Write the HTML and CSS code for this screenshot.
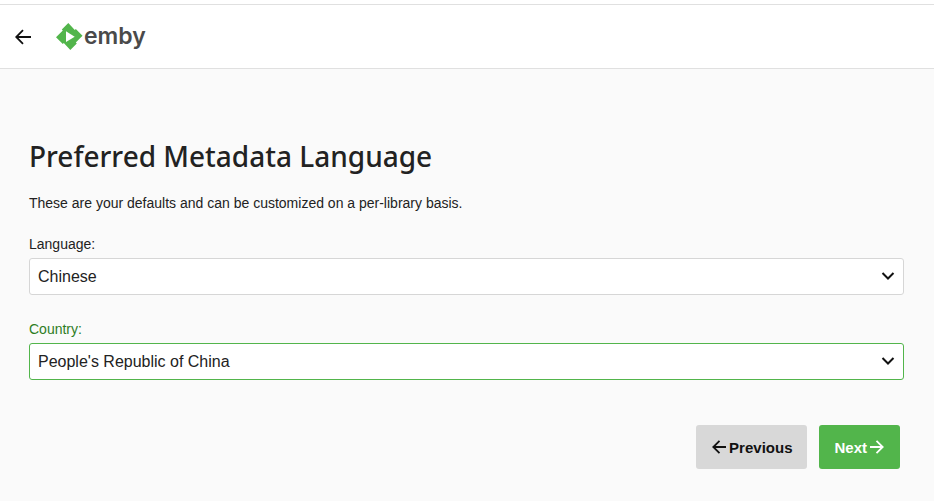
FILE: index.html
```html
<!DOCTYPE html>
<html lang="en">

<head>
    <meta charset="UTF-8">
    <meta name="viewport" content="width=device-width, initial-scale=1.0">
    <title>Emby</title>
    <link rel="stylesheet" href="styles.css">
</head>

<body>
    <header class="header">
        <button class="back" type="button" aria-label="Back">
            <svg class="icon" viewBox="0 0 16 16">
                <path d="M16 8H2M8 1.2L1.2 8L8 14.8" />
            </svg>
        </button>
        <a class="logo" href="#">
            <svg class="mark" viewBox="0 0 27 27">
                <path d="M12.3 0L5.8 6.5L6.8 7.5L0 14.3L6.8 21L7.8 20L14.3 27L20.8 20.5L19.8 19.5L26.5 12.7L19.8 6L18.8 7Z" />
                <path class="play" d="M10 8.3V19L18.7 13.8Z" />
            </svg>
            <span>emby</span>
        </a>
    </header>

    <main>
        <form class="wizard">
            <h1>Preferred Metadata Language</h1>
            <p>These are your defaults and can be customized on a per-library basis.</p>

            <div class="field">
                <label for="language">Language:</label>
                <div class="selectBox">
                    <select id="language">
                        <option>Chinese</option>
                    </select>
                    <svg class="chevron" viewBox="0 0 14 14">
                        <path d="M1.5 4L7 9.5L12.5 4" />
                    </svg>
                </div>
            </div>

            <div class="field active">
                <label for="country">Country:</label>
                <div class="selectBox">
                    <select id="country">
                        <option>People's Republic of China</option>
                    </select>
                    <svg class="chevron" viewBox="0 0 14 14">
                        <path d="M1.5 4L7 9.5L12.5 4" />
                    </svg>
                </div>
            </div>

            <div class="buttons">
                <button class="btn prev" type="button">
                    <svg class="icon" viewBox="0 0 16 16">
                        <path d="M15 8H3M8.5 1.8L2.3 8L8.5 14.2" />
                    </svg>
                    Previous
                </button>
                <button class="btn next" type="submit">
                    Next
                    <svg class="icon" viewBox="0 0 16 16">
                        <path d="M1 8H13M7.5 1.8L13.7 8L7.5 14.2" />
                    </svg>
                </button>
            </div>
        </form>
    </main>
</body>

</html>
```
FILE: styles.css
```css
* {
    box-sizing: border-box;
}

html {
    background: #fff;
}

body {
    margin: 0;
    padding-top: 4px;
    min-height: 100vh;
    background: #fafafa;
    background-clip: content-box;
    font-family: "Liberation Sans", Arial, sans-serif;
    font-size: 14px;
    line-height: 20px;
    color: #222;
}

.header {
    display: flex;
    align-items: center;
    gap: 25px;
    height: 65px;
    padding: 0 15px;
    background: #fff;
    border-top: 1px solid #e0e0e0;
    border-bottom: 1px solid #e0e0e0;
}

.icon {
    display: block;
    width: 16px;
    height: 16px;
    fill: none;
    stroke: currentColor;
    stroke-width: 1.8;
}

.back {
    padding: 0;
    border: none;
    background: none;
    color: #111;
}

.logo {
    display: flex;
    align-items: center;
    gap: 1px;
    color: #4a4a4a;
    font: 600 23px/28px Inter, sans-serif;
    text-decoration: none;
}

.logo span {
    padding-bottom: 2px;
}

.mark {
    width: 27px;
    height: 27px;
    fill: #52b54b;
}

.play {
    fill: #fff;
}

.wizard {
    padding: 68px 30px 32px 29px;
}

h1 {
    margin: 0 0 18px;
    font: 500 28px/38px "Noto Sans", sans-serif;
}

p {
    margin: 0 0 21px;
}

.field {
    display: flex;
    flex-direction: column;
    gap: 4px;
    margin-bottom: 24px;
}

.selectBox {
    position: relative;
}

select {
    display: block;
    width: 100%;
    height: 37px;
    padding: 0 32px 0 8px;
    appearance: none;
    border: 1px solid #d6d6d6;
    border-radius: 3px;
    background: #fff;
    color: #222;
    font: 16px "Liberation Sans", Arial, sans-serif;
}

.chevron {
    position: absolute;
    top: 11px;
    right: 9px;
    width: 14px;
    height: 14px;
    fill: none;
    stroke: #111;
    stroke-width: 2;
    pointer-events: none;
}

.active label {
    color: #2e7d1e;
}

.active select {
    border-color: #52b54b;
}

.buttons {
    display: flex;
    justify-content: flex-end;
    gap: 12px;
    margin-top: 45px;
    padding-right: 4px;
}

.btn {
    display: flex;
    align-items: center;
    gap: 2px;
    height: 44px;
    padding: 0 15px;
    border: none;
    border-radius: 3px;
    background: #d8d8d8;
    color: #111;
    font: bold 15px "Liberation Sans", Arial, sans-serif;
}

.next {
    background: #52b54b;
    color: #fff;
}
```
